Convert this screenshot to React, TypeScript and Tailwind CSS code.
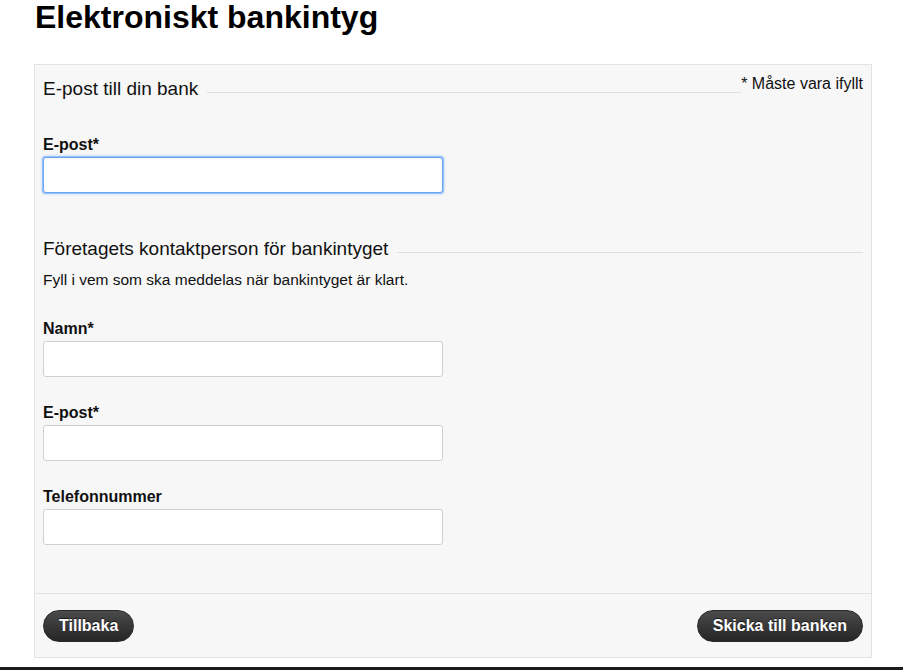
import React from "react";

function Legend({ text, children }: { text: string; children?: React.ReactNode }) {
  return (
    <div className="flex items-start">
      <div className="flex flex-1 items-start">
        <span className="text-[19px] leading-[22px] text-[#111] whitespace-nowrap">{text}</span>
        <div className="ml-[9px] mt-[14px] h-px flex-1 bg-[#e0e0e0]" />
      </div>
      {children}
    </div>
  );
}

function Field({ label, focused, className }: { label: string; focused?: boolean; className?: string }) {
  return (
    <div className={className}>
      <div className="mb-[3px] text-[16px] font-bold leading-[18px] text-[#111]">{label}</div>
      <div
        className={
          focused
            ? "h-[36px] w-[400px] rounded-[3px] border border-[#6ba6f2] bg-white shadow-[0_0_0_1px_#93bff8,0_0_3px_1px_#b3d3fb]"
            : "h-[36px] w-[400px] rounded-[3px] border border-[#cfcfcf] bg-white"
        }
      />
    </div>
  );
}

function Btn({ children }: { children: React.ReactNode }) {
  return (
    <div className="flex h-[32px] items-center rounded-full border border-[#2a2a2a] bg-gradient-to-b from-[#4b4b4b] to-[#262626] px-[15px] text-[16px] font-bold text-white [text-shadow:0_-1px_0_rgba(0,0,0,0.6)]">
      {children}
    </div>
  );
}

export default function App() {
  return (
    <div
      className="flex h-[670px] w-[903px] flex-col overflow-hidden bg-white text-black"
      style={{ fontFamily: '"Liberation Sans", Arial, Helvetica, sans-serif' }}
    >
      <h1 className="pl-[35px] text-[32px] font-bold leading-[34px] text-black">Elektroniskt bankintyg</h1>
      <div className="ml-[34px] mt-[30px] w-[838px] border border-[#e2e2e2] bg-[#f7f7f7]">
        <div className="px-[8px] pt-[13px] pb-[48px]">
          <Legend text="E-post till din bank">
            <span className="-mt-[5px] text-[16px] leading-[22px] text-[#111]">* Måste vara ifyllt</span>
          </Legend>
          <Field label="E-post*" focused className="mt-[36px]" />
          <div className="mt-[45px]">
            <Legend text="Företagets kontaktperson för bankintyget" />
          </div>
          <p className="mt-[11px] text-[15.5px] leading-[18px] text-[#111]">
            Fyll i vem som ska meddelas när bankintyget är klart.
          </p>
          <Field label="Namn*" className="mt-[31px]" />
          <Field label="E-post*" className="mt-[27px]" />
          <Field label="Telefonnummer" className="mt-[27px]" />
        </div>
        <div className="flex items-center justify-between border-t border-[#e2e2e2] px-[8px] pt-[16px] pb-[15px]">
          <Btn>Tillbaka</Btn>
          <Btn>Skicka till banken</Btn>
        </div>
      </div>
      <div className="mt-[9px] h-[4px] w-full bg-[#1c1c1c]" />
    </div>
  );
}
